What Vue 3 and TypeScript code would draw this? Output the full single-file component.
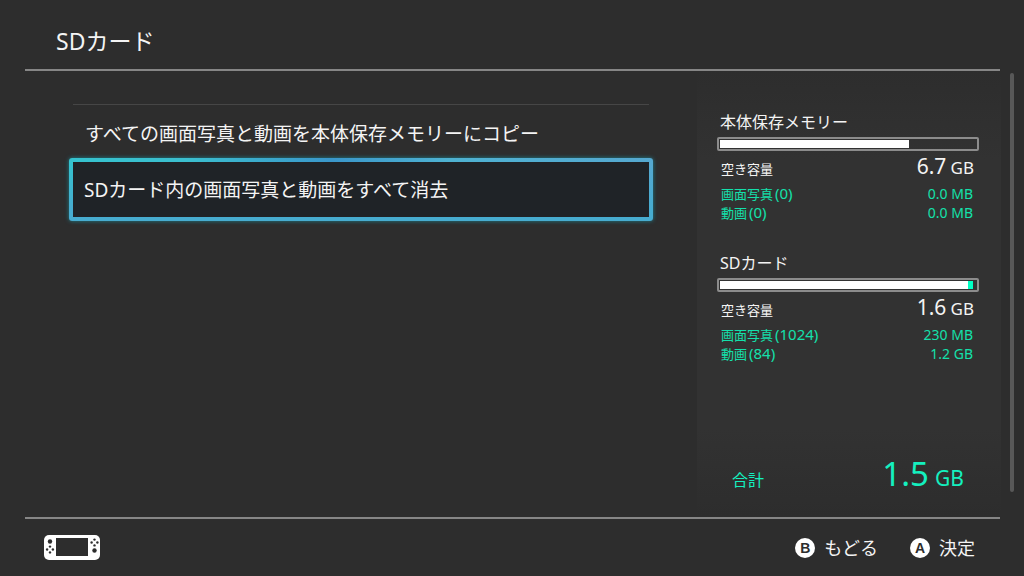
<script setup lang="ts">
interface Usage {
  label: string
  count: number
  amount: string
}
interface Storage {
  name: string
  used: number
  media: number
  free: string
  freeUnit: string
  details: Usage[]
}

const actions: string[] = [
  'すべての画面写真と動画を本体保存メモリーにコピー',
  'SDカード内の画面写真と動画をすべて消去',
]
const selected = 1

const storages: Storage[] = [
  {
    name: '本体保存メモリー',
    used: 74,
    media: 0,
    free: '6.7',
    freeUnit: 'GB',
    details: [
      { label: '画面写真', count: 0, amount: '0.0 MB' },
      { label: '動画', count: 0, amount: '0.0 MB' },
    ],
  },
  {
    name: 'SDカード',
    used: 97,
    media: 2,
    free: '1.6',
    freeUnit: 'GB',
    details: [
      { label: '画面写真', count: 1024, amount: '230 MB' },
      { label: '動画', count: 84, amount: '1.2 GB' },
    ],
  },
]
</script>

<template>
  <div class="screen">
    <header class="header">
      <h1>SDカード</h1>
    </header>

    <main class="main">
      <section class="list">
        <button
          v-for="(action, i) in actions"
          :key="action"
          type="button"
          class="item"
          :class="{ selected: i === selected }"
        >
          <span class="item-label">{{ action }}</span>
        </button>
      </section>

      <aside class="side">
        <section v-for="s in storages" :key="s.name" class="storage">
          <h2>{{ s.name }}</h2>
          <div class="meter">
            <div class="used" :style="{ width: s.used + '%' }"></div>
            <div class="media" :style="{ width: s.media + '%' }"></div>
          </div>
          <div class="free">
            <span class="free-label">空き容量</span>
            <span><span class="free-value">{{ s.free }}</span> <span class="free-unit">{{ s.freeUnit }}</span></span>
          </div>
          <div v-for="d in s.details" :key="d.label" class="detail">
            <span>{{ d.label }}<span class="count">({{ d.count }})</span></span>
            <span class="amount">{{ d.amount }}</span>
          </div>
        </section>
        <div class="total">
          <span class="total-label">合計</span>
          <span><span class="total-value">1.5</span> <span class="total-unit">GB</span></span>
        </div>
      </aside>
      <div class="scroll"></div>
    </main>

    <footer class="footer">
      <svg class="console" viewBox="0 0 56 25" aria-hidden="true">
        <rect width="56" height="25" rx="5" fill="#fff" />
        <rect x="12" y="3" width="32" height="18" fill="#2d2d2d" />
        <g fill="#2d2d2d">
          <circle cx="6" cy="6.5" r="2.2" />
          <circle cx="6" cy="11.6" r="1.2" />
          <circle cx="6" cy="17.4" r="1.2" />
          <circle cx="3.1" cy="14.5" r="1.2" />
          <circle cx="8.9" cy="14.5" r="1.2" />
          <circle cx="50.5" cy="15.5" r="2.2" />
          <circle cx="50.5" cy="4.6" r="1.2" />
          <circle cx="50.5" cy="10.4" r="1.2" />
          <circle cx="47.6" cy="7.5" r="1.2" />
          <circle cx="53.4" cy="7.5" r="1.2" />
        </g>
      </svg>
      <nav class="hints">
        <button type="button" class="hint"><span class="key">B</span>もどる</button>
        <button type="button" class="hint"><span class="key">A</span>決定</button>
      </nav>
    </footer>
  </div>
</template>

<style>
body {
  background: #2d2d2d;
}
</style>

<style scoped>
.screen {
  display: flex;
  flex-direction: column;
  box-sizing: border-box;
  min-height: 100vh;
  padding: 0 24px 0 25px;
  background: #2d2d2d;
  color: #f4f4f4;
  font-family: "Noto Sans", "Noto Sans CJK JP", sans-serif;
  font-weight: 400;
}
.header {
  padding: 25px 31px 12px;
  border-bottom: 2px solid #868686;
}
h1,
h2 {
  margin: 0;
  font-weight: 400;
}
h1 {
  font-size: 23px;
  line-height: 32px;
}
.main {
  display: flex;
  flex: 1;
  margin-right: -14px;
}
.list {
  flex: 1;
  margin: 33px 48px 0;
  border-top: 1px solid #464646;
}
button {
  border: 0;
  padding: 0;
  background: none;
  color: inherit;
  font: inherit;
}
.item {
  display: block;
  width: 100%;
  padding: 2px 12px 0;
  font-size: 19px;
  line-height: 55px;
  text-align: left;
}
.item.selected {
  box-sizing: content-box;
  margin: -4px;
  padding: 2px 0 0;
  border: 4px solid transparent;
  border-radius: 3px;
  background:
    linear-gradient(#1f2327, #1f2327) padding-box,
    linear-gradient(#47acd000 10%, #47acd0 80%) border-box,
    linear-gradient(90deg, #35c3cf 0%, #3bbfcf 20%, #3a97cb 45%, #4eb2d2 65%, #55a8d0 100%) border-box;
  box-shadow: 0 0 4px #1f7f8c;
  line-height: 53px;
}
.item.selected .item-label {
  padding: 0 11px;
}
.side {
  display: flex;
  flex-direction: column;
  box-sizing: border-box;
  width: 304px;
  padding: 38px 22px 14px 20px;
  background: linear-gradient(#2d2d2d, #323232 20%, #323232 80%, #2d2d2d);
}
.storage {
  margin-bottom: 28px;
}
h2 {
  padding: 0 3px 2px;
  font-size: 16px;
  line-height: 26px;
}
.meter {
  display: flex;
  height: 8px;
  padding: 1px;
  border: 2px solid #8c8c8c;
  border-radius: 2px;
}
.used {
  background: #fff;
}
.media {
  background: #00ffc3;
}
.free,
.detail,
.total {
  display: flex;
  justify-content: space-between;
  align-items: baseline;
}
.free {
  padding: 1px 5px 0 4px;
  line-height: 29px;
}
.free-label {
  font-size: 13px;
}
.free-value {
  font-size: 21px;
}
.free-unit {
  font-size: 17px;
}
.detail {
  padding: 0 6px 0 4px;
  color: #14e0ab;
  font-size: 13px;
  line-height: 18px;
}
.count {
  padding-left: 2px;
  font-size: 15px;
}
.amount {
  font-size: 14px;
}
.total {
  margin-top: auto;
  padding: 0 15px;
  color: #14f0bf;
  line-height: 46px;
}
.total-label {
  font-size: 16px;
}
.total-value {
  padding-right: 2px;
  font-size: 33px;
}
.total-unit {
  font-size: 21px;
}
.scroll {
  width: 4px;
  margin: 2px 0 25px 9px;
  border-radius: 2px;
  background: #585858;
}
.footer {
  display: flex;
  justify-content: space-between;
  align-items: center;
  height: 57px;
  padding: 0 25px 0 19px;
  border-top: 2px solid #868686;
}
.console {
  width: 56px;
  height: 25px;
}
.hints {
  display: flex;
  gap: 32px;
}
.hint {
  display: flex;
  align-items: center;
  gap: 9px;
  font-size: 18px;
  line-height: 24px;
}
.key {
  width: 20px;
  border-radius: 50%;
  background: #fff;
  color: #2d2d2d;
  font-family: "Liberation Sans", sans-serif;
  font-size: 14px;
  font-weight: 700;
  line-height: 20px;
  text-align: center;
}
</style>
